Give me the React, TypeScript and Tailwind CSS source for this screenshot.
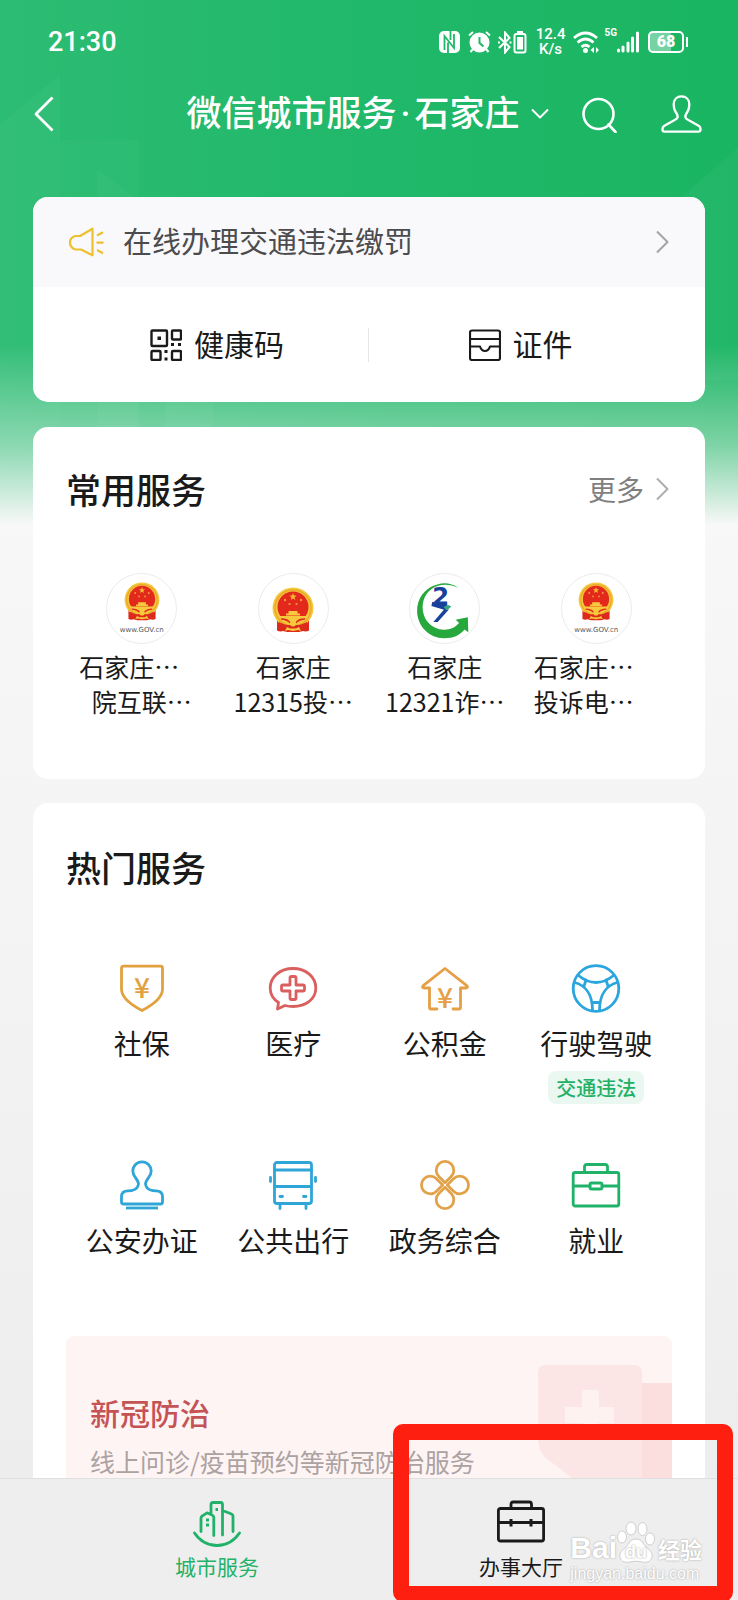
import React from "react";

const stroke = {
  fill: "none",
  stroke: "currentColor",
  strokeWidth: 2,
  strokeLinecap: "round",
  strokeLinejoin: "round",
} as const;

function Chevron({ className }: { className?: string }) {
  return (
    <svg className={className} width="13" height="24" viewBox="0 0 13 24" {...stroke} strokeLinecap="butt">
      <path d="M1 1.500 11.500 12 1 22.500" />
    </svg>
  );
}

function Emblem({ className }: { className?: string }) {
  return (
    <svg className={className} viewBox="0 0 42 46">
      <path d="M5 31h32v12.500q-3 1.500-6 .5l-4 1H15l-4-1q-3 1-6-.5z" fill="#dc2a1c" />
      <circle cx="21" cy="21" r="20.500" fill="#f5c73a" />
      <circle cx="21" cy="21" r="18" fill="none" stroke="#eaa92c" strokeWidth="1.500" />
      <circle cx="21" cy="20" r="15.500" fill="#e3281c" />
      <path d="m21 6 1 2.500 2.600.1-2 1.700.7 2.600-2.300-1.500-2.300 1.500.7-2.600-2-1.700 2.600-.1z" fill="#f7b733" />
      <g fill="#f19a3a">
        <circle cx="13" cy="13" r="1.200" />
        <circle cx="29" cy="13" r="1.200" />
        <circle cx="17.500" cy="17" r="1.100" />
        <circle cx="24.500" cy="17" r="1.100" />
      </g>
      <path d="M16.500 24h9v2.500h2.500v2H14v-2h2.500z" fill="#f7c93c" />
      <path d="M6 29h30l-3 3.500q-6 0-7 2.500H16q-1-2.500-7-2.500z" fill="#f7c93c" />
      <path d="M9 32q7 0 9 4M33 32q-7 0-9 4" fill="none" stroke="#e3281c" strokeWidth="1.500" />
      <path d="M7 35q6 3 9 3h10q3 0 9-3v8l-5-2-4 1.500H16L12 41l-5 2z" fill="#dc2a1c" />
      <path d="m13 44 2-4 3 1.500h6l3-1.500 2 4-3-1-5 1-5-1z" fill="#f7c93c" />
      <circle cx="21" cy="36.500" r="3" fill="#f7c93c" />
    </svg>
  );
}

function GovLogo() {
  return (
    <div className="flex flex-col items-center pt-2">
      <Emblem className="h-[39px] w-[36px]" />
      <span className="mt-[5px] text-[7px] leading-[9px] text-[#555] [font-family:'DejaVu_Sans',sans-serif]">
        www.GOV.cn
      </span>
    </div>
  );
}

function SwooshLogo() {
  return (
    <svg width="69" height="69" viewBox="0 0 71 71">
      <path
        d="M49.700 14.300C44 10 36 8.500 29 10.500 15 14 7 25 7.300 39 8 54 20 66 35 66c10 0 17-3.500 21-9l4 3-.5-15.500L47 47l3.500 3.500C46 55.500 41 57.500 35 57.300 22 57 13.500 47 13 35c-.3-11 6-20 16-23 7-2 14-1 20.700 2.300z"
        fill="#27a83c"
      />
      <text
        x="23"
        y="32"
        fontSize="25"
        fontFamily="DejaVu Sans"
        fontWeight="bold"
        fill="#17419b"
      >
        2
      </text>
      <path d="m23 28.500 16 4-3 4.500-14-4z" fill="#17419b" />
      <path d="m35.500 36 4.500.5L28.500 49.500H24z" fill="#17419b" />
      <path d="m34.500 34 5-2 3 1.500-4.500 4z" fill="#35a879" />
    </svg>
  );
}

function Yen({ y }: { y: number }) {
  return (
    <text
      x="24"
      y={y}
      textAnchor="middle"
      fontSize="28"
      fontWeight="500"
      fontFamily="Noto Sans CJK SC"
      fill="currentColor"
      stroke="none"
    >
      ¥
    </text>
  );
}

const steering = (
  <>
    <circle cx="24" cy="24.500" r="22.800" />
    <path d="M6.500 11.500Q15 18.500 24 18.500t17.500-7" />
    <path d="M2.500 18.500C13 21 20.500 30 20.500 46.500M45.500 18.500C35 21 27.500 30 27.500 46.500" />
    <path d="M20.700 38.500h6.600M14 16 12 22M34 16l2 6" />
  </>
);

const petal = "M24 21.700 17.800 15.500A8.800 8.800 0 1 1 30.200 15.500Z";

const services = [
  {
    name: "社保",
    color: "text-[#e2a13f]",
    icon: (
      <>
        <path d="M5.500 2.200h37q2 0 2 2V25c0 8-8 15-20.500 21.500C11.500 40 3.500 33 3.500 25V4.200q0-2 2-2z" />
        <Yen y={34} />
      </>
    ),
  },
  {
    name: "医疗",
    color: "text-[#d9605f]",
    icon: (
      <>
        <path d="M9.500 38.500C4 35 1.200 30 1.200 24 1.200 13 11 4.500 24 4.500S46.800 13 46.800 24 37 42.500 24 42.500q-4.500 0-8-1L8.500 45z" />
        <path d="M21 14q0-1.500 1.500-1.500h3q1.500 0 1.500 1.500v7h7q1.500 0 1.500 1.500v3q0 1.500-1.500 1.500h-7v7q0 1.500-1.500 1.500h-3Q21 35.500 21 34v-7h-7q-1.500 0-1.500-1.500v-3Q12.500 21 14 21h7z" />
      </>
    ),
  },
  {
    name: "公积金",
    color: "text-[#e5a046]",
    icon: (
      <>
        <path d="M16 45h-6q-1.500 0-1.500-1.500V24H3q-2.500-.5-.8-2.300L24 4.500l21.800 17.200Q47.500 23.500 45 24h-5.500v19.500q0 1.500-1.500 1.500h-6" />
        <Yen y={44} />
      </>
    ),
  },
  { name: "行驶驾驶", color: "text-[#2aa5de]", badge: "交通违法", icon: steering },
  {
    name: "公安办证",
    color: "text-[#2fa5d8]",
    icon: (
      <>
        <path d="M19.500 26C21.500 23 20.500 20.500 18 17.500 15.500 14.500 14.800 13 14.800 10a9.200 9.200 0 0 1 18.400 0c0 3-.7 4.500-3.200 7.500-2.500 3-3.500 5.500-1.500 8.500 2 3 5 3.800 9.500 3.800q6.500 0 6.500 6V41q0 2-2 2h-37q-2 0-2-2v-5.200q0-6 6.500-6c4.500 0 7.500-.8 9.500-3.800z" />
        <path d="M8 47h32" strokeLinecap="butt" />
      </>
    ),
  },
  {
    name: "公共出行",
    color: "text-[#2fa5d8]",
    icon: (
      <>
        <rect x="5.500" y="1.500" width="37" height="41" rx="2.500" />
        <path d="M5.500 9h37M5.500 25.500h37M11 35.500h2.500M34.500 35.500H37M1.500 16.500v4M46.500 16.500v4M11 43v4.500M37 43v4.500" />
      </>
    ),
  },
  {
    name: "政务综合",
    color: "text-[#e2a24a]",
    icon: (
      <>
        <path d={petal} />
        <path d={petal} transform="rotate(90 24 24)" />
        <path d={petal} transform="rotate(180 24 24)" />
        <path d={petal} transform="rotate(270 24 24)" />
      </>
    ),
  },
  {
    name: "就业",
    color: "text-[#1fb268]",
    icon: (
      <>
        <rect x="1.200" y="11.500" width="45.600" height="33.500" rx="2" />
        <path d="M12.500 11V6q0-2.500 2.500-2.500h18q2.500 0 2.500 2.500v5M1.500 25H18M30 25h16.500" />
        <rect x="18" y="22" width="12" height="6" rx="1.500" />
      </>
    ),
  },
];

const frequent = [
  { logo: <GovLogo />, lines: ["石家庄…", "院互联…"], shift: ["pr-[25px]", ""] },
  {
    logo: <Emblem className="mt-[13px] h-[46px] w-[42px]" />,
    lines: ["石家庄", "12315投…"],
    shift: ["", ""],
  },
  { logo: <SwooshLogo />, lines: ["石家庄", "12321诈…"], shift: ["", ""] },
  { logo: <GovLogo />, lines: ["石家庄…", "投诉电…"], shift: ["pr-[25px]", "pr-[25px]"] },
];

function StatusBar() {
  return (
    <div className="flex h-[84px] items-center justify-between pr-[50px] pl-12 text-white [font-family:Roboto,sans-serif]">
      <span className="text-[27px] leading-8 font-medium">21:30</span>
      <div className="flex items-center">
        {/* nfc */}
        <svg width="21" height="22" viewBox="0 0 21 22">
          <rect width="21" height="22" rx="5" fill="#fff" />
          <path
            d="M5.500 19V5l9.500 12V3M9 11.500V22M11.500 0v9"
            fill="none"
            stroke="#20b768"
            strokeWidth="1.800"
          />
        </svg>
        {/* alarm */}
        <svg className="ml-2" width="23" height="22" viewBox="0 0 23 22" fill="none" stroke="#fff" strokeWidth="2">
          <circle cx="11.500" cy="11.500" r="9" fill="#fff" />
          <path d="M1 4.500 5 1M22 4.500 18 1M5 18l-2.500 3M18 18l2.500 3" />
          <path d="M11.500 6v6l4 3.500" stroke="#20b768" />
        </svg>
        {/* bluetooth and its battery */}
        <svg className="ml-[6px]" width="30" height="23" viewBox="0 0 30 23" fill="none" stroke="#fff" strokeWidth="2">
          <path d="m2 6 10.500 10-4.500 5.500v-20L12.500 7 2 17" />
          <path d="M1 11.500h2M12.500 11.500h2" />
          <rect x="17.500" y="3" width="11" height="18.500" rx="2" />
          <path d="M20 1h6" />
          <path d="M20 6h6v12.500h-6z" fill="#fff" stroke="none" />
        </svg>
        <div className="ml-[9px] flex flex-col items-center text-[15px] leading-[15px] font-medium">
          <span>12.4</span>
          <span>K/s</span>
        </div>
        {/* wifi */}
        <svg className="ml-2" width="26" height="23" viewBox="0 0 26 23" fill="none" stroke="#fff" strokeWidth="2.800">
          <path d="M1 7q11.500-10 23 0M4.500 11.500q8-7 16 0M8.500 16q4-3.500 8 0" />
          <circle cx="12.500" cy="19.500" r="2.500" fill="#fff" stroke="none" />
          <path d="m21 16-3.500 3 3.500 3zM23 16l3 3-3 3z" fill="#fff" stroke="none" />
        </svg>
        <span className="ml-[5px] self-start text-[10px] leading-3 font-bold">5G</span>
        <svg width="22" height="22" viewBox="0 0 22 22" stroke="#fff" strokeWidth="3" strokeLinecap="round">
          <path d="M1.500 20v-1M6 20v-4M11 20v-8M15.500 20V7M20.500 20V2" />
        </svg>
        {/* main battery */}
        <div className="ml-[9px] flex items-center gap-[2px]">
          <div className="flex h-[22px] w-[36px] items-center justify-center rounded-[5px] border-2 border-white bg-linear-to-r from-white/40 from-65% to-transparent to-65% text-[16px] leading-4 font-black">
            68
          </div>
          <div className="h-[10px] w-[2px] bg-white" />
        </div>
      </div>
    </div>
  );
}

function TopBar() {
  return (
    <header className="flex h-[60px] items-center pr-9 pl-[34px] text-white">
      <div className="flex flex-1">
        <button aria-label="返回">
          <svg width="20" height="36" viewBox="0 0 20 36" {...stroke} strokeWidth="2.800" strokeLinecap="butt">
            <path d="M18.500 1.500 2 18l16.500 16.500" />
          </svg>
        </button>
      </div>
      <button className="flex items-center gap-3">
        <h1 className="pb-[2px] text-[35px] leading-[50px] font-medium">
          微信城市服务<span className="px-1 [font-family:Roboto,sans-serif]">·</span>石家庄
        </h1>
        <svg width="18" height="12" viewBox="0 0 18 12" {...stroke} strokeLinecap="butt">
          <path d="m1 1.500 8 8 8-8" />
        </svg>
      </button>
      <div className="flex flex-1 items-center justify-end gap-[43px]">
        <button aria-label="搜索">
          <svg width="36" height="38" viewBox="0 0 36 38" {...stroke} strokeWidth="2.600">
            <circle cx="16.500" cy="19" r="15" />
            <path d="m26.500 29.500 7 7.500" />
          </svg>
        </button>
        <button aria-label="我的">
          <svg width="41" height="40" viewBox="0 0 42 40" {...stroke} strokeWidth="2.400">
            <path d="M17 23.500c.5-2-.5-3.500-2-5.500-1.500-2.500-2-4.500-2-7.500C13 5 16.500 2 21 2s8 3 8 8.500c0 3-.5 5-2 7.500-1.500 2-2.500 3.500-2 5.500.5 1.500 1.500 2 3 2.700L38.500 32q2 1.200 2 3.500v.5q0 2-2 2h-35q-2 0-2-2v-.5q0-2.300 2-3.500L14 26.200c1.500-.7 2.500-1.200 3-2.700z" />
          </svg>
        </button>
      </div>
    </header>
  );
}

function QuickCard() {
  return (
    <section className="mt-[53px] overflow-hidden rounded-[15px] bg-white">
      <a href="#notice" className="flex h-[90px] items-center bg-[#f9f9fb] px-9 text-[#4c4c4e]">
        <svg className="text-[#edc02f]" width="36" height="30" viewBox="0 0 36 30" {...stroke} strokeWidth="2.200" strokeLinecap="butt">
          <path d="M23.500 1.700v26.600L12 22.500H6.500Q1 20.500 1 15.500T6.500 9H11z" />
          <path d="m28 8.500 6-3.200M27.500 15.700h7M28 23l6 3.200" />
        </svg>
        <span className="ml-[18px] flex-1 pb-1 text-[29px] leading-10">在线办理交通违法缴罚</span>
        <Chevron className="text-[#a3a3a5]" />
      </a>
      <div className="grid h-[115px] grid-cols-2 items-center px-[33px] text-[30px] text-[#1a1a1a]">
        <button className="flex h-[34px] items-center justify-center gap-3 border-r border-[#e6e6e6]">
          <svg width="32" height="32" viewBox="0 0 32 32" {...stroke} strokeWidth="2.400">
            <rect x="1.500" y="1.500" width="15.500" height="15.500" rx="1" />
            <rect x="22" y="1.500" width="9" height="9" rx="1" />
            <rect x="1.500" y="22" width="9" height="9" rx="1" />
            <rect x="22" y="22" width="9" height="9" rx="1" />
            <path
              d="M7.500 7.500H11V11H7.500zM21 14h3v3h-3zM28 14h3v3h-3zM14.500 21h3v3h-3zM14.500 28.500h3v3h-3z"
              fill="currentColor"
              stroke="none"
            />
          </svg>
          <span className="pb-[3px]">健康码</span>
        </button>
        <button className="flex h-[34px] items-center justify-center gap-3">
          <svg width="32" height="32" viewBox="0 0 32 32" {...stroke} strokeWidth="2.200">
            <rect x="1" y="1.500" width="30" height="29.500" rx="2" />
            <path d="M1 10h30M1 17.500h10q1.500 4.500 5 4.500t5-4.500h10" />
          </svg>
          <span className="pb-[3px]">证件</span>
        </button>
      </div>
    </section>
  );
}

function FrequentCard() {
  return (
    <section className="mt-[25px] rounded-[15px] bg-white px-[33px] pt-[37px] pb-[60px]">
      <div className="flex items-center justify-between pr-[3px]">
        <h2 className="text-[35px] leading-[50px] font-medium text-[#1a1a1a]">常用服务</h2>
        <a href="#more" className="flex items-center gap-3 text-[28px] text-[#7f7f7f]">
          更多
          <Chevron className="text-[#adadad]" />
        </a>
      </div>
      <div className="mt-[59px] grid grid-cols-4">
        {frequent.map((item, i) => (
          <a key={i} href="#service" className="flex flex-col items-center">
            <div className="flex h-[71px] w-[71px] justify-center rounded-full border border-[#ececec]">
              {item.logo}
            </div>
            <div className="mt-[5px] text-center text-[25px] leading-[35px] whitespace-nowrap text-[#1a1a1a]">
              {item.lines.map((line, n) => (
                <div key={line} className={item.shift[n]}>
                  {line}
                </div>
              ))}
            </div>
          </a>
        ))}
      </div>
    </section>
  );
}

function HotCard() {
  return (
    <section className="mt-6 rounded-t-[15px] bg-white px-[33px] pt-[39px]">
      <h2 className="text-[35px] leading-[50px] font-medium text-[#1a1a1a]">热门服务</h2>
      <div className="mt-[72px] grid grid-cols-4 gap-y-[57px]">
        {services.map((s) => (
          <a key={s.name} href="#service" className="flex flex-col items-center">
            <svg
              className={s.color + " overflow-visible"}
              width="48"
              height="48"
              viewBox="0 0 48 48"
              {...stroke}
              strokeWidth="2.800"
            >
              {s.icon}
            </svg>
            <span className="mt-[11px] text-[28px] leading-10 whitespace-nowrap text-[#1a1a1a]">{s.name}</span>
            {s.badge && (
              <span className="mt-2 rounded-lg bg-[#ebf8f1] px-2 text-[20px] leading-[33px] font-medium text-[#22b067]">
                {s.badge}
              </span>
            )}
          </a>
        ))}
      </div>

      <a href="#covid" className="relative mt-[76px] block rounded-lg bg-[#fef4f3] px-6 pt-14 pb-10">
        <svg className="absolute top-[29px] right-0" width="134" height="140" viewBox="0 0 134 140">
          <path d="M104 18h30v122h-50z" fill="#fbdfdf" />
          <path d="M8 0h88q8 0 8 8v132H62Q30 108 10 95-1 86 0 70V8q0-8 8-8z" fill="#fce5e5" />
          <path d="M47 25h11q3 0 3 3v14h15v16H60v16H45V58H27V42h17V28q0-3 3-3z" fill="#fef2f0" />
        </svg>
        <h3 className="relative text-[30px] leading-10 font-medium text-[#c45356]">新冠防治</h3>
        <p className="relative mt-[14px] text-[25px] leading-[30px] whitespace-nowrap text-[#aca2a2]">
          线上问诊/疫苗预约等新冠防治服务
        </p>
      </a>
    </section>
  );
}

function Watermark() {
  return (
    <div className="pointer-events-none absolute right-9 bottom-4 text-white [text-shadow:0_0_2px_#999]">
      <div className="flex items-end">
        <span className="text-[30px] leading-8 font-bold [font-family:'Liberation_Sans',sans-serif]">Bai</span>
        <div className="relative h-[43px] w-[38px]">
          <svg width="38" height="43" viewBox="0 0 38 43" fill="#fff" stroke="#cfcfcf" strokeWidth="1">
            <ellipse cx="5" cy="16" rx="4.500" ry="6" />
            <ellipse cx="14" cy="7.500" rx="5" ry="6.500" />
            <ellipse cx="25.500" cy="8" rx="4.500" ry="6.500" />
            <ellipse cx="33" cy="18" rx="4.500" ry="6" />
            <path d="M19 18c6 0 7 5 10 8s7 5 6 10-6 6-10 5-8-1-12 0-9 0-10-5 3-7 6-10 4-8 10-8z" />
          </svg>
          <span className="absolute inset-x-0 bottom-[2px] text-center text-[18px] leading-5 font-bold [font-family:'Liberation_Sans',sans-serif]">
            du
          </span>
        </div>
        <span className="ml-[3px] text-[22px] leading-8 font-bold">经验</span>
      </div>
      <div className="text-[16px] leading-5 [font-family:'Liberation_Sans',sans-serif]">jingyan.baidu.com</div>
    </div>
  );
}

function TabBar() {
  return (
    <nav className="relative grid grid-cols-2 border-t border-[#e0e0e0] bg-[#eeeeee] px-[65px] pt-[21px] pb-[19px]">
      <button className="flex flex-col items-center text-[#1fb268]">
        <svg width="48" height="48" viewBox="0 0 48 48" {...stroke} strokeWidth="2.800">
          <path d="M18 13V4.500Q18 2.500 20 2.500h7.500q2 0 2 2V35M29.500 10.500l8.500 3.200q2 .8 2 2.800v15M8 31.500V18q0-1.500 1.500-2.200l4.500-3 5 2.200q1.800.8 1.800 2.500v18" />
          <path d="M1.500 33q8.500 12.500 22.500 12.500T46.500 33" />
          <path d="M22.500 8H25v3h-2.500zM13 18.500h3v3h-3zM13 23.500h3v3h-3z" fill="currentColor" stroke="none" />
        </svg>
        <span className="mt-[3px] text-[21px] leading-[30px]">城市服务</span>
      </button>
      <button className="flex flex-col items-center text-[#1a1a1a]">
        <svg width="48" height="48" viewBox="0 0 48 48" {...stroke} strokeWidth="2.800">
          <rect x="1.400" y="8.500" width="45.200" height="32.500" rx="2" />
          <path d="M14 8V4.500Q14 2 16 2h16.500q2 0 2 2.500V8M1.500 22.500h45" />
          <path d="M14 19v7.500M34 19v7.500" strokeLinecap="butt" strokeWidth="3" />
        </svg>
        <span className="mt-[3px] text-[21px] leading-[30px]">办事大厅</span>
      </button>
      <Watermark />
      {/* highlight around the second tab */}
      <div className="pointer-events-none absolute -top-[55px] right-[5px] -bottom-[2px] w-[340px] rounded-[10px] border-16 border-[#ff1f10]" />
    </nav>
  );
}

export default function App() {
  return (
    <div
      lang="zh-CN"
      className="relative flex h-screen flex-col overflow-hidden bg-linear-to-b from-[#f8f8f8] from-30% to-[#ededed] to-95% [font-family:'Noto_Sans_CJK_SC',sans-serif]"
    >
      {/* green backdrop that fades out behind the cards */}
      <div className="absolute inset-x-0 top-0 h-[530px] bg-linear-to-r from-[#2cbc73] via-[#20b86a] to-[#1ab562]">
        <svg className="absolute top-0 left-0" width="240" height="530" viewBox="0 0 240 530" fill="#fff">
          <path d="M60 75v455H0V125z" opacity=".03" />
          <path d="M60 140h79v390H60z" opacity=".02" />
          <path d="m97 170 42 30v330H97z" opacity=".03" />
          <path d="M165 330h48v200h-48z" opacity=".03" />
        </svg>
        <svg className="absolute top-[140px] right-0" width="60" height="240" viewBox="0 0 60 240" fill="#fff">
          <path d="M60 8v232H0V60z" opacity=".04" />
        </svg>
        <div className="absolute inset-0 bg-linear-to-b from-transparent from-65% via-[#f8f8f8]/45 via-84% to-[#f8f8f8] to-99%" />
      </div>

      <div className="relative min-h-0 flex-1 overflow-hidden">
        <StatusBar />
        <TopBar />
        <main className="px-[33px]">
          <QuickCard />
          <FrequentCard />
          <HotCard />
        </main>
      </div>
      <TabBar />
    </div>
  );
}
